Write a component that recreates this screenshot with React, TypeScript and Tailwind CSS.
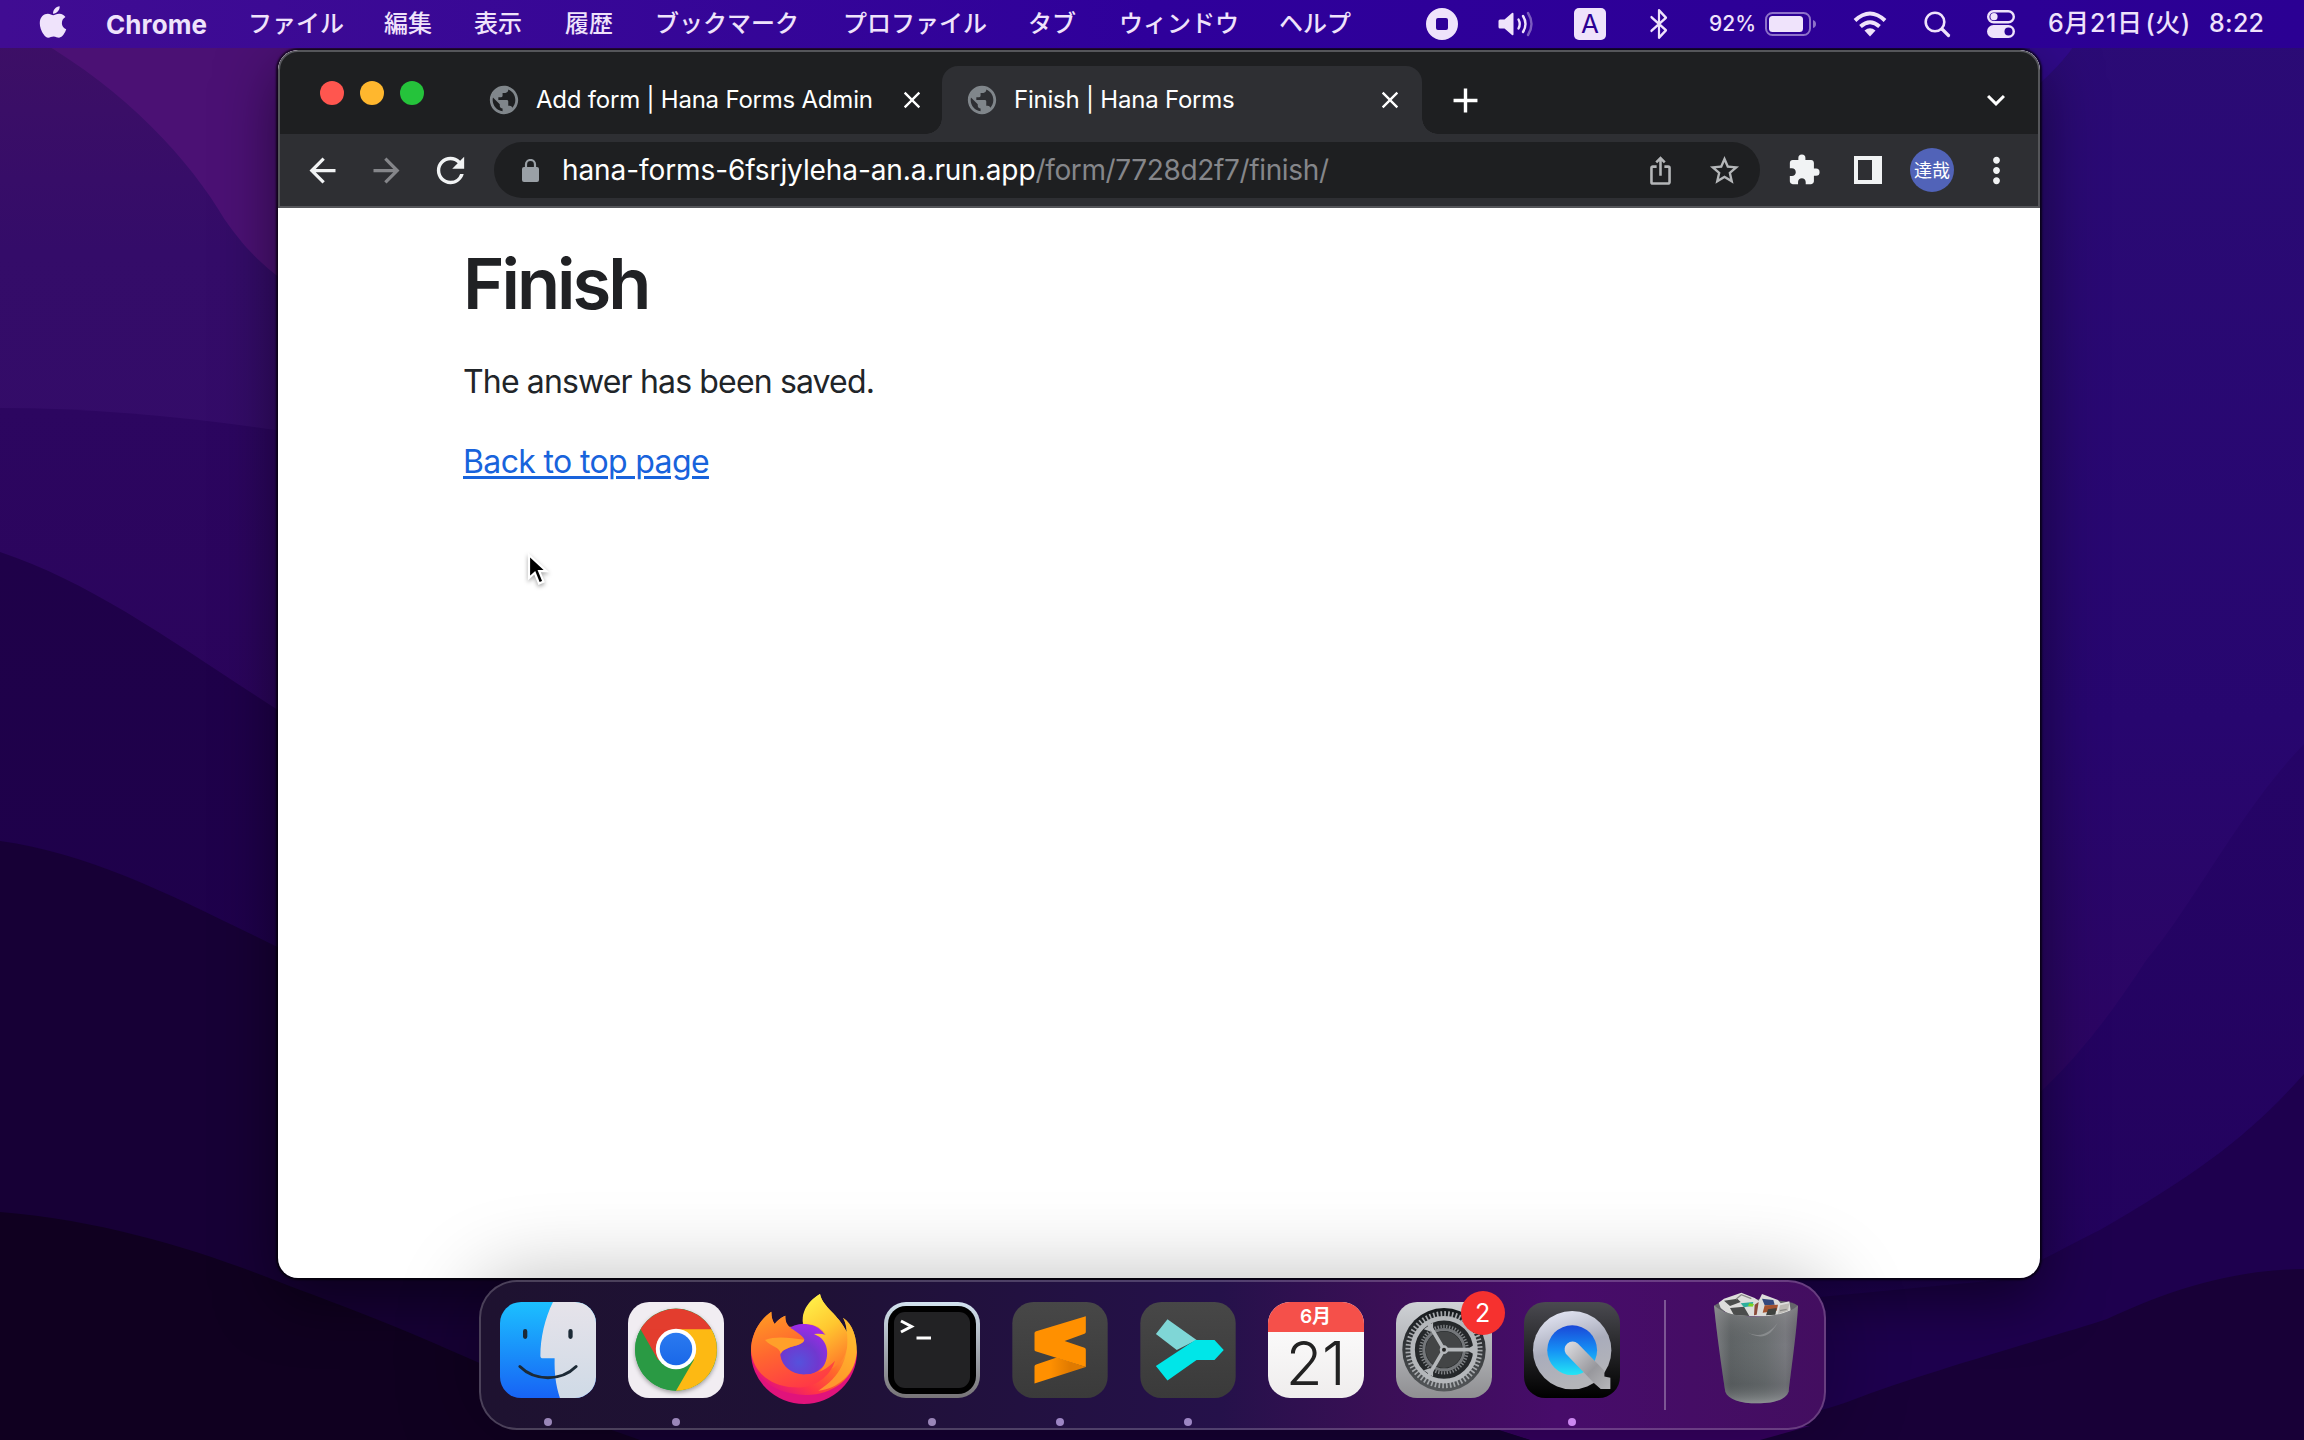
import type { ReactNode } from "react";
import {
  MdAdd,
  MdArrowBack,
  MdArrowForward,
  MdClose,
  MdExpandMore,
  MdExtension,
  MdIosShare,
  MdMoreVert,
  MdPublic,
  MdRefresh,
  MdStarBorder,
} from "react-icons/md";
import { FaApple } from "react-icons/fa";

function Wallpaper() {
  return (
    <svg className="absolute inset-0" width="2304" height="1440" viewBox="0 0 2304 1440" preserveAspectRatio="none">
      <defs>
        <linearGradient id="wl1" x1="0" y1="0" x2="0" y2="1">
          <stop offset="0" stopColor="#3d0f66" />
          <stop offset="0.15" stopColor="#340c69" />
          <stop offset="1" stopColor="#300963" />
        </linearGradient>
        <linearGradient id="wl2" x1="0" y1="0" x2="0" y2="1">
          <stop offset="0" stopColor="#2c0660" />
          <stop offset="1" stopColor="#270052" />
        </linearGradient>
        <linearGradient id="wl3" x1="0" y1="0" x2="0" y2="1">
          <stop offset="0" stopColor="#1f0149" />
          <stop offset="1" stopColor="#1e014f" />
        </linearGradient>
        <linearGradient id="wr1" x1="0" y1="0" x2="0" y2="1">
          <stop offset="0" stopColor="#2b0b76" />
          <stop offset="0.5" stopColor="#27066f" />
          <stop offset="0.75" stopColor="#2c0562" />
        </linearGradient>
        <linearGradient id="wr2" x1="0" y1="0" x2="0" y2="1">
          <stop offset="0" stopColor="#250467" />
          <stop offset="1" stopColor="#220259" />
        </linearGradient>
      </defs>
      <rect width="2304" height="1440" fill="#4b1174" />
      <path d="M0 40 L38 40 C125 90 190 160 225 220 C245 248 260 265 300 292 L1150 600 V1440 H0Z" fill="url(#wl1)" />
      <path d="M0 408 C100 408 200 418 300 434 L1150 700 V1440 H0Z" fill="url(#wl2)" />
      <path d="M0 552 C100 585 190 655 300 724 L1150 1000 V1440 H0Z" fill="url(#wl3)" />
      <path d="M0 841 C100 855 190 905 300 958 L1150 1200 V1440 H0Z" fill="#170036" />
      <path d="M1150 0 H2304 V1440 H1150Z" fill="url(#wr1)" />
      <path d="M2030 40 H2078 C2065 60 2050 75 2030 92Z" fill="#300a8a" />
      <path d="M2304 744 C2240 810 2190 910 2147 959 C2120 1000 2080 1060 2020 1110 L1150 1300 V1440 H2304Z" fill="url(#wr2)" />
      <path d="M2304 1074 C2250 1135 2200 1172 2100 1230 C2060 1250 2040 1262 2000 1280 L1150 1360 V1440 H2304Z" fill="#1e004e" />
      <path d="M1486 1428 C1650 1450 1800 1420 1850 1401 C1930 1370 2060 1335 2107 1319 C2170 1290 2230 1270 2304 1269 V1440 H1486Z" fill="#180037" />
      <path d="M1486 1426 L1530 1440 H1760 L1810 1426Z" fill="#35005f" />
      <path d="M0 1212 C120 1222 220 1258 300 1290 C450 1345 560 1400 640 1440 H0Z" fill="#100020" />
      <path d="M600 1426 H1486 L1530 1440 H640Z" fill="#150032" />
    </svg>
  );
}

const menus: [string, string][] = [
  ["ファイル", "w-[136px]"],
  ["編集", "w-[90px]"],
  ["表示", "w-[91px]"],
  ["履歴", "w-[90px]"],
  ["ブックマーク", "w-[188px]"],
  ["プロファイル", "w-[185px]"],
  ["タブ", "w-[91px]"],
  ["ウィンドウ", "w-[160px]"],
  ["ヘルプ", "w-[147px]"],
];

function MenuBar() {
  return (
    <header className="relative flex h-12 items-center bg-gradient-to-r from-[#400c92] via-[#2f009b] to-[#2b0093] text-[24px] font-medium text-[#efe3fb]">
      <FaApple className="ml-[38px] -mt-1 h-[36px] w-[30px]" />
      <div className="ml-[38px] w-[142px] whitespace-nowrap text-[26px] font-bold tracking-[0.1px]">Chrome</div>
      {menus.map(([name, w]) => (
        <div key={name} className={"shrink-0 whitespace-nowrap " + w}>
          {name}
        </div>
      ))}
      <svg width="32" height="32" viewBox="0 0 32 32">
        <path fill="currentColor" fillRule="evenodd" d="M16 0a16 16 0 1 0 0 32a16 16 0 0 0 0-32ZM12 10h8q2 0 2 2v8q0 2-2 2h-8q-2 0-2-2v-8q0-2 2-2Z" />
      </svg>
      <svg className="ml-[40px]" width="37" height="28" viewBox="0 0 37 28" fill="none" stroke="currentColor" strokeWidth="2.4" strokeLinecap="round">
        <path d="M2 9.5h4.5L14 3q1.500-1 1.500 1v20q0 2-1.500 1L6.500 18.500H2q-1.500 0-1.500-1.500v-6Q.5 9.500 2 9.500Z" fill="currentColor" stroke="none" />
        <path d="M20.500 9.500q2.500 4.500 0 9" />
        <path d="M25 6q5 8 0 16" />
        <path d="M30 3q7 11 0 22" opacity=".4" />
      </svg>
      <div className="ml-[39px] flex h-8 w-8 items-center justify-center rounded-[5px] bg-[#efe3fb] text-[26px] leading-none font-normal text-[#2b0093]">A</div>
      <svg className="ml-[43px]" width="20" height="32" viewBox="0 0 20 28" preserveAspectRatio="none" fill="none" stroke="currentColor" strokeWidth="2.200" strokeLinejoin="round" strokeLinecap="round">
        <path d="M2.500 8 L17 19.500 L10 26 V2 L17 8.500 L2.500 20" />
      </svg>
      <div className="ml-[40px] w-[56px] whitespace-nowrap text-[21px] tracking-[0.1px]">92%</div>
      <svg width="52" height="24" viewBox="0 0 52 24">
        <rect x="1" y="1" width="44" height="22" rx="6.500" fill="none" stroke="currentColor" strokeOpacity=".5" strokeWidth="2" />
        <rect x="4" y="4" width="34" height="16" rx="3.500" fill="currentColor" />
        <path d="M48 8q3 1 3 4t-3 4Z" fill="currentColor" opacity=".5" />
      </svg>
      <svg className="ml-[36px]" width="34" height="26" viewBox="0 0 34 26" fill="none" stroke="currentColor" strokeWidth="4">
        <path d="M2 9.500 Q17-4.500 32 9.500" />
        <path d="M7.500 15.500 Q17 7 26.500 15.500" />
        <path d="M17 25.500 L11.500 19.500 Q17 15 22.500 19.500Z" fill="currentColor" stroke="none" />
      </svg>
      <svg className="ml-[37px]" width="27" height="27" viewBox="0 0 27 27" fill="none" stroke="currentColor" strokeWidth="2.600" strokeLinecap="round">
        <circle cx="11" cy="11" r="9.300" />
        <path d="M18 18 L24.500 24.500" strokeWidth="3.200" />
      </svg>
      <svg className="ml-[36px]" width="28" height="28" viewBox="0 0 28 28">
        <rect x="1.200" y="1.200" width="25.600" height="11" rx="5.500" fill="none" stroke="currentColor" strokeWidth="2.400" />
        <circle cx="7" cy="6.700" r="3.600" fill="currentColor" />
        <rect y="15" width="28" height="13" rx="6.500" fill="currentColor" />
        <circle cx="21.500" cy="21.500" r="4" fill="#2b0093" />
      </svg>
      <div className="ml-[33px] flex w-[161px] whitespace-nowrap text-[25px] tracking-[0.6px]">
        6月21日<span className="ml-[3px]">(火)</span>
      </div>
      <div className="whitespace-nowrap text-[25px] tracking-[0.3px]">8:22</div>
    </header>
  );
}

function TabLabel({ title }: { title: string }) {
  return (
    <>
      <MdPublic className="size-[34px] shrink-0 text-[#80868b]" />
      <span className="ml-[15px] flex-1 whitespace-nowrap text-[24px] font-normal tracking-[-0.22px] text-white">{title}</span>
      <MdClose className="size-[28px] shrink-0 text-white" />
    </>
  );
}

function LockIcon() {
  return (
    <svg width="17" height="23" viewBox="0 0 17 23">
      <path d="M4 9V5.500a4.500 4.500 0 0 1 9 0V9" fill="none" stroke="#9aa0a6" strokeWidth="2.200" />
      <rect y="8" width="17" height="15" rx="2" fill="#9aa0a6" />
    </svg>
  );
}

function Cursor() {
  return (
    <svg className="absolute top-[502px] left-[248px] drop-shadow-[0_2px_2px_rgba(0,0,0,0.35)]" width="26" height="36" viewBox="0 0 26 36">
      <path d="M3 3 V26 L8.800 20.800 L13 31.500 L17.500 29.600 L13.200 19.200 H20.500Z" fill="#000" stroke="#fff" strokeWidth="2.200" />
    </svg>
  );
}

function BrowserWindow() {
  return (
    <main className="relative mt-[2px] ml-[278px] flex h-[1228px] w-[1762px] shrink-0 flex-col overflow-hidden rounded-[20px] bg-white">
      <div className="flex h-[84px] shrink-0 items-end rounded-t-[20px] border-x-2 border-t-2 border-[#55565a] bg-[#1e1f21]">
        <div className="flex h-[68px] w-[184px] items-start gap-4 pt-[15px] pl-[40px]">
          <span className="size-6 rounded-full bg-[#ff564f]" />
          <span className="size-6 rounded-full bg-[#ffb72e]" />
          <span className="size-6 rounded-full bg-[#25c33b]" />
        </div>
        <div className="flex h-[68px] w-[478px] items-center pr-[16px] pl-[23px]">
          <TabLabel title="Add form | Hana Forms Admin" />
        </div>
        <div className="relative flex h-[68px] w-[480px] items-center rounded-t-[16px] bg-[#2e2f33] pr-[18px] pl-[23px]">
          <span className="absolute bottom-0 -left-4 size-4 bg-[radial-gradient(circle_at_0_0,transparent_15.500px,#2e2f33_16px)]" />
          <span className="absolute -right-4 bottom-0 size-4 bg-[radial-gradient(circle_at_100%_0,transparent_15.500px,#2e2f33_16px)]" />
          <TabLabel title="Finish | Hana Forms" />
        </div>
        <div className="flex h-[68px] flex-1 items-center justify-between pr-[24px] pl-[23px]">
          <MdAdd className="size-[41px] text-white" />
          <MdExpandMore className="size-[36px] text-white" />
        </div>
      </div>
      <div className="flex h-[74px] shrink-0 items-center border-x-2 border-b-2 border-[#55565a] bg-[#2e2f33] pl-[10px] text-[#f1f3f4]">
        <div className="flex w-16 justify-center"><MdArrowBack className="size-[39px]" /></div>
        <div className="flex w-16 justify-center"><MdArrowForward className="size-[39px] text-[#85868a]" /></div>
        <div className="flex w-16 justify-center"><MdRefresh className="size-[41px]" /></div>
        <div className="ml-3 flex h-14 w-[1266px] items-center rounded-full bg-[#1e1f21] pr-1 pl-3">
          <div className="flex w-12 justify-center"><LockIcon /></div>
          <div className="ml-[8px] flex flex-1 whitespace-nowrap text-[28px]">
            <span className="tracking-[-0.09px] text-white">hana-forms-6fsrjyleha-an.a.run.app</span>
            <span className="tracking-[-0.36px] text-[#85868a]">/form/7728d2f7/finish/</span>
          </div>
          <div className="flex w-16 justify-center"><MdIosShare className="size-[31px] text-[#b4b6b8]" /></div>
          <div className="flex w-16 justify-center"><MdStarBorder className="size-[35px] text-[#b4b6b8]" /></div>
        </div>
        <div className="ml-3 flex w-16 justify-center"><MdExtension className="size-[34px]" /></div>
        <div className="flex w-16 justify-center"><span className="h-7 w-7 border-4 border-r-[10px] border-[#f1f3f4]" /></div>
        <div className="flex w-16 justify-center">
          <span className="flex size-11 items-center justify-center rounded-full bg-[#5163b8] text-[18px] text-white">達哉</span>
        </div>
        <div className="flex w-16 justify-center"><MdMoreVert className="size-[41px]" /></div>
      </div>
      <section className="flex flex-col items-start pl-[185px] text-[32px] text-[#212529]">
        <h1 className="mt-[34px] text-[70.500px] leading-[84px] font-semibold whitespace-nowrap tracking-[-3px] text-[#202124]">Finish</h1>
        <p className="mt-[32px] leading-[48px] whitespace-nowrap tracking-[-0.85px]">The answer has been saved.</p>
        <a className="mt-[32px] leading-[48px] whitespace-nowrap tracking-[-0.64px] text-[#1863dc] underline decoration-[3px] underline-offset-[3px]">Back to top page</a>
      </section>
      <Cursor />
    </main>
  );
}

function FinderIcon() {
  return (
    <svg width="96" height="96" viewBox="0 0 290 290">
      <defs>
        <linearGradient id="fb" x1="0" y1="0" x2="0" y2="1"><stop offset="0" stopColor="#1cc0ff" /><stop offset="1" stopColor="#1763f5" /></linearGradient>
        <linearGradient id="fw" x1="0" y1="0" x2="0" y2="1"><stop offset="0" stopColor="#e6e3ea" /><stop offset="1" stopColor="#cfdae6" /></linearGradient>
        <clipPath id="fc"><rect width="290" height="290" rx="64" /></clipPath>
      </defs>
      <g clipPath="url(#fc)">
        <rect width="290" height="290" fill="url(#fb)" />
        <path d="M160 0 C135 50 122 110 122 162 Q122 170 130 170 H165 C164 215 168 250 181 290 H290 V0Z" fill="url(#fw)" />
      </g>
      <g stroke="#1c2a36" strokeLinecap="round" fill="none">
        <path d="M76 88 V105 M213 88 V105" strokeWidth="13" />
        <path d="M60 195 C105 240 185 240 230 195" strokeWidth="9" />
      </g>
    </svg>
  );
}

function ChromeIcon() {
  return (
    <svg width="96" height="96" viewBox="503 125 290 290">
      <defs>
        <filter id="cs" x="-20%" y="-20%" width="140%" height="140%"><feDropShadow dx="0" dy="6" stdDeviation="6" floodOpacity=".35" /></filter>
        <linearGradient id="cblue" x1="0" y1="0" x2="0" y2="1"><stop offset="0" stopColor="#2a7af0" /><stop offset="1" stopColor="#1a68e8" /></linearGradient>
      </defs>
      <rect x="503" y="125" width="290" height="290" rx="64" fill="#f1edf2" />
      <circle cx="648" cy="269" r="124" fill="#2a9a44" filter="url(#cs)" />
      <path d="M648 269 L541 207 A124 124 0 0 1 755 207 Z" fill="#e33d2e" />
      <path d="M541 207 A124 124 0 0 0 648 393 L702 300 L648 269 L594 300Z" fill="#2a9a44" />
      <path d="M755 207 A124 124 0 0 1 648 393 L702 300 L648 207Z" fill="#fdb913" />
      <path d="M541 207 L594 300 L648 300 L648 207Z" fill="#e33d2e" />
      <circle cx="648" cy="267" r="61" fill="#fff" />
      <circle cx="648" cy="267" r="49" fill="url(#cblue)" />
    </svg>
  );
}

function FirefoxIcon() {
  return (
    <svg className="-mt-[3px] shrink-0" width="106" height="110" viewBox="873 100 318 330">
      <defs>
        <linearGradient id="ff1" x1="0.85" y1="0.05" x2="0.2" y2="0.95">
          <stop offset="0" stopColor="#fff044" /><stop offset="0.3" stopColor="#ffb02e" /><stop offset="0.55" stopColor="#ff6a2a" /><stop offset="0.8" stopColor="#ff3447" /><stop offset="1" stopColor="#e3137a" />
        </linearGradient>
        <linearGradient id="ff2" x1="0.2" y1="0" x2="0.6" y2="1">
          <stop offset="0" stopColor="#fff24a" /><stop offset="0.5" stopColor="#ffc62f" /><stop offset="1" stopColor="#ff7a2a" />
        </linearGradient>
        <linearGradient id="ff3" x1="0.2" y1="0" x2="0.6" y2="1">
          <stop offset="0" stopColor="#ff9a22" /><stop offset="0.5" stopColor="#ff6630" /><stop offset="1" stopColor="#ff3a45" />
        </linearGradient>
        <radialGradient id="ff4" cx="0.4" cy="0.75" r="0.75">
          <stop offset="0" stopColor="#5552dc" /><stop offset="0.5" stopColor="#7038cf" /><stop offset="1" stopColor="#a12ae8" />
        </radialGradient>
      </defs>
      <path d="M873 275 A159 155 0 0 0 1191 275 L1180 240 H880Z" fill="#e0137b" />
      <path d="M873 270 C873 225 895 180 934 153 C934 170 938 182 944 190 C952 180 963 170 976 165 C975 180 978 190 985 198 H1030 C1022 160 1045 120 1080 100 C1088 140 1135 160 1160 214 C1160 198 1156 184 1149 171 C1180 190 1191 235 1190 275 C1186 355 1115 405 1035 403 C950 400 880 360 873 270Z" fill="url(#ff1)" />
      <circle cx="1032" cy="266" r="77" fill="url(#ff4)" />
      <path d="M1030 190 C1022 155 1045 120 1080 100 C1088 140 1135 160 1160 214 C1172 270 1150 325 1075 336 C1110 305 1110 250 1078 228 L1062 220 Q1080 217 1099 223 C1085 200 1062 188 1030 190Z" fill="url(#ff2)" />
      <path d="M1149 171 C1180 190 1191 235 1190 275 C1184 345 1130 385 1075 390 C1140 350 1170 290 1160 214 C1160 198 1156 184 1149 171Z" fill="#ffb42c" opacity=".7" />
      <path d="M873 270 C873 225 895 180 934 153 C934 170 938 182 944 190 C952 180 963 170 976 165 C975 182 982 196 998 206 C1012 216 1028 226 1033 236 C1030 252 1005 254 990 260 C972 268 961 272 961 284 C966 320 1000 345 1040 341 C1080 338 1100 325 1125 300 C1110 350 1060 385 1000 380 C930 375 880 335 873 270Z" fill="url(#ff3)" />
      <path d="M915 238 C950 225 990 232 1033 237 C1030 252 1005 254 990 260 C975 266 966 270 962 280 C960 258 935 260 915 238Z" fill="#ffa02a" />
    </svg>
  );
}

function TerminalIcon() {
  return (
    <div className="size-24 rounded-[22px] bg-gradient-to-b from-[#d3e3f0] to-[#777477] p-[4px]">
      <div className="size-full rounded-[18px] bg-black p-[6px]">
        <div className="flex size-full rounded-[11px] bg-[#222224]">
          <svg width="40" height="34" viewBox="0 0 40 34" fill="none" stroke="#fff" strokeWidth="3">
            <path d="M7 9 L17.500 14.500 L7 20" />
            <path d="M22.500 26 H37" />
          </svg>
        </div>
      </div>
    </div>
  );
}

function SublimeIcon() {
  return (
    <svg width="96" height="96" viewBox="216 125 288 290">
      <defs>
        <linearGradient id="dk" x1="0" y1="0" x2="0" y2="1"><stop offset="0" stopColor="#474747" /><stop offset="1" stopColor="#3a3a3a" /></linearGradient>
        <linearGradient id="sbs" x1="0" y1="0" x2="1" y2="0"><stop offset="0.3" stopColor="#ff9000" /><stop offset="0.7" stopColor="#e07a00" /></linearGradient>
      </defs>
      <rect x="216" y="125" width="288" height="290" rx="64" fill="url(#dk)" />
      <path d="M283 320 Q283 316 288 314 L350 293 L438 321 L283 371Z" fill="url(#sbs)" />
      <path d="M283 219 Q283 215 288 213 L438 168 V216 Q438 219 434 221 L374 243 L434 263 Q438 265 438 269 V321 L286 274 Q283 273 283 269Z" fill="#ff9000" />
    </svg>
  );
}

function MergeIcon() {
  return (
    <svg width="96" height="96" viewBox="600 125 288 290">
      <rect x="600" y="125" width="288" height="290" rx="64" fill="url(#dk)" />
      <path d="M682 177 L770 240 L710 270 L647 222Z" fill="#7fd6d6" />
      <path d="M647 318 L766 240 H824 L852 270 L824 300 H770 L682 362Z" fill="#00e6e8" />
    </svg>
  );
}

function CalendarIcon() {
  return (
    <div className="flex size-24 flex-col items-center overflow-hidden rounded-[22px] bg-gradient-to-b from-white to-[#efeded]">
      <div className="flex h-[30px] w-full shrink-0 items-center justify-center bg-[#f5504a] text-[19px] font-semibold text-white">6月</div>
      <div className="text-[60px] leading-[62px] font-light tracking-[-0.5px] text-[#222]">21</div>
    </div>
  );
}

function SettingsIcon() {
  return (
    <div className="relative size-24">
      <svg width="96" height="96" viewBox="0 0 290 290">
        <defs>
          <linearGradient id="sg" x1="0" y1="0" x2="0" y2="1"><stop offset="0" stopColor="#cfd2d6" /><stop offset="1" stopColor="#8f8f92" /></linearGradient>
          <linearGradient id="sd" x1="0" y1="0" x2="0" y2="1"><stop offset="0" stopColor="#15191c" /><stop offset="1" stopColor="#55585a" /></linearGradient>
        </defs>
        <rect width="290" height="290" rx="64" fill="url(#sg)" />
        <circle cx="145" cy="144" r="126" fill="url(#sd)" />
        <circle cx="145" cy="144" r="108" fill="none" stroke="#a6a9ac" strokeWidth="17" strokeDasharray="5 6.310" />
        <circle cx="145" cy="144" r="90" fill="#25282a" />
        <circle cx="145" cy="144" r="70" fill="none" stroke="#85888b" strokeWidth="10" strokeDasharray="4 4.800" />
        <circle cx="145" cy="144" r="61" fill="none" stroke="#74777a" strokeWidth="9" />
        <circle cx="145" cy="144" r="55" fill="#434546" />
        <circle cx="145" cy="144" r="95" fill="none" stroke="#b4b7ba" strokeWidth="14" />
        <path d="M145 144 H240 M145 144 L98 64 M145 144 L98 224" stroke="#b4b7ba" strokeWidth="11" />
        <path d="M240 128 V160 L222 150 V138Z M84 82 L112 62 L112 80 L102 88Z M84 206 L112 226 L112 208 L102 200Z" fill="#b4b7ba" />
        <circle cx="145" cy="144" r="13" fill="#b4b7ba" />
        <circle cx="145" cy="144" r="6" fill="#222" />
      </svg>
      <span className="absolute -top-[11px] left-[65px] flex size-11 items-center justify-center rounded-full bg-[#f6312f] text-[25px] leading-none text-white">2</span>
    </div>
  );
}

function QuickTimeIcon() {
  return (
    <svg width="96" height="96" viewBox="432 65 289 289">
      <defs>
        <linearGradient id="qb" x1="0" y1="0" x2="0" y2="1"><stop offset="0" stopColor="#4a4a50" /><stop offset="1" stopColor="#000" /></linearGradient>
        <linearGradient id="qr" x1="0" y1="0" x2="0.300" y2="1"><stop offset="0" stopColor="#eceefc" /><stop offset="0.55" stopColor="#a9acbb" /><stop offset="1" stopColor="#b4b5b9" /></linearGradient>
        <linearGradient id="qi" x1="0" y1="0" x2="0" y2="1"><stop offset="0" stopColor="#1a47d8" /><stop offset="0.5" stopColor="#1590f5" /><stop offset="1" stopColor="#23e6f5" /></linearGradient>
        <linearGradient id="qh" x1="0" y1="0" x2="1" y2="1"><stop offset="0" stopColor="#e0e0e4" /><stop offset="0.6" stopColor="#98989d" /><stop offset="1" stopColor="#b8b8bb" /></linearGradient>
      </defs>
      <rect x="432" y="65" width="289" height="289" rx="64" fill="url(#qb)" />
      <circle cx="577" cy="210" r="118" fill="url(#qr)" />
      <circle cx="577" cy="210" r="75" fill="url(#qi)" />
      <path d="M558 221 A24 24 0 0 1 594 190 L674 272 V289 L692 293 V327 H663 L644 310Z" fill="url(#qh)" />
    </svg>
  );
}

function TrashIcon() {
  return (
    <svg className="-mt-[4px] shrink-0" width="84" height="112" viewBox="70 36 252 336">
      <defs>
        <linearGradient id="tb" x1="0" y1="0" x2="1" y2="0"><stop offset="0" stopColor="#808386" /><stop offset="0.2" stopColor="#5f6466" /><stop offset="0.6" stopColor="#6b7072" /><stop offset="0.85" stopColor="#7b7c82" /><stop offset="1" stopColor="#66656d" /></linearGradient>
        <linearGradient id="tg" x1="0" y1="0" x2="0" y2="1"><stop offset="0" stopColor="#a0a0a0" stopOpacity=".45" /><stop offset="0.4" stopColor="#555" stopOpacity=".05" /><stop offset="0.8" stopColor="#303436" stopOpacity=".2" /><stop offset="1" stopColor="#b0b4b4" stopOpacity=".5" /></linearGradient>
      </defs>
      <ellipse cx="196" cy="80" rx="126" ry="22" fill="#64646a" />
      <path d="M84 68 L100 56 L152 38 L192 54 L204 62 L214 42 L262 60 L270 70 L296 64 L300 92 L260 110 L120 108 L90 84Z" fill="#dddddb" />
      <path d="M100 62 L140 56 L150 66 L118 78Z M118 84 L160 80 L176 108 L130 106Z" fill="#4b4d4c" />
      <path d="M150 70 L188 66 L184 78 L160 82Z" fill="#2cae9c" />
      <path d="M176 70 L190 72 L186 80 L172 78Z" fill="#7ed321" />
      <path d="M214 56 L248 60 L252 74 L222 76Z" fill="#34497d" />
      <path d="M222 76 L262 74 L258 92 L216 98Z" fill="#a4532f" />
      <path d="M192 74 L204 66 L198 104 L190 106Z" fill="#8b4a3a" />
      <path d="M268 76 L296 70 L292 92 L262 102Z" fill="#bcb9b4" />
      <path d="M232 88 L258 84 L254 104 L226 106Z" fill="#3f423f" />
      <path d="M136 58 L152 44 L182 56 M268 92 L288 88" stroke="#8a8a88" strokeWidth="4" fill="none" />
      <path d="M70 76 C90 98 140 110 196 110 C252 110 302 98 322 76 C318 160 300 280 294 335 C284 360 250 370 200 370 C150 370 112 358 104 335 C94 270 78 160 70 76Z" fill="url(#tb)" />
      <path d="M70 76 C90 98 140 110 196 110 C252 110 302 98 322 76 C318 160 300 280 294 335 C284 360 250 370 200 370 C150 370 112 358 104 335 C94 270 78 160 70 76Z" fill="url(#tg)" />
      <path d="M160 150 C200 180 240 160 262 126 C240 170 210 185 160 150Z" fill="#a5a8aa" opacity=".5" />
    </svg>
  );
}

function DockItem({ children, dot }: { children: ReactNode; dot?: string }) {
  return (
    <div className="flex w-24 flex-col items-center">
      <div className="flex h-24 w-24 shrink-0 items-center justify-center">{children}</div>
      {dot && <span className={"mt-[20px] size-2 shrink-0 rounded-full " + dot} />}
    </div>
  );
}

function Dock() {
  return (
    <nav className="relative mt-[2px] flex h-[150px] w-[1347px] shrink-0 items-start gap-8 self-center rounded-[38px] border-2 border-white/20 bg-[linear-gradient(90deg,#1e1230_0%,#1f1136_25%,#25114a_55%,#3a0f56_67%,#470c6a_80%,#430e60_100%)] bg-origin-border pt-[20px] pl-[19px] shadow-[0_0_84px_rgba(0,0,0,0.28)]">
      <DockItem dot="bg-[#9a86b8]"><FinderIcon /></DockItem>
      <DockItem dot="bg-[#9a86b8]"><ChromeIcon /></DockItem>
      <DockItem><FirefoxIcon /></DockItem>
      <DockItem dot="bg-[#9a86b8]"><TerminalIcon /></DockItem>
      <DockItem dot="bg-[#9d86c4]"><SublimeIcon /></DockItem>
      <DockItem dot="bg-[#9d86c4]"><MergeIcon /></DockItem>
      <DockItem><CalendarIcon /></DockItem>
      <DockItem><SettingsIcon /></DockItem>
      <DockItem dot="bg-[#cc88f0]"><QuickTimeIcon /></DockItem>
      <span className="-mt-[2px] mr-[10px] ml-[12px] h-[110px] w-[2px] bg-white/30" />
      <DockItem><TrashIcon /></DockItem>
    </nav>
  );
}

export default function App() {
  return (
    <div className="relative h-[1440px] w-[2304px] overflow-hidden bg-[#1e004e] [font-family:Inter,'Noto_Sans_CJK_JP',sans-serif]">
      <Wallpaper />
      <div className="absolute top-[50px] left-[278px] h-[1228px] w-[1762px] rounded-[20px] shadow-[0_20px_60px_rgba(0,0,0,0.5),0_0_2px_2px_rgba(0,0,0,0.7)]" />
      <div className="relative flex h-full flex-col">
        <MenuBar />
        <BrowserWindow />
        <Dock />
      </div>
    </div>
  );
}
